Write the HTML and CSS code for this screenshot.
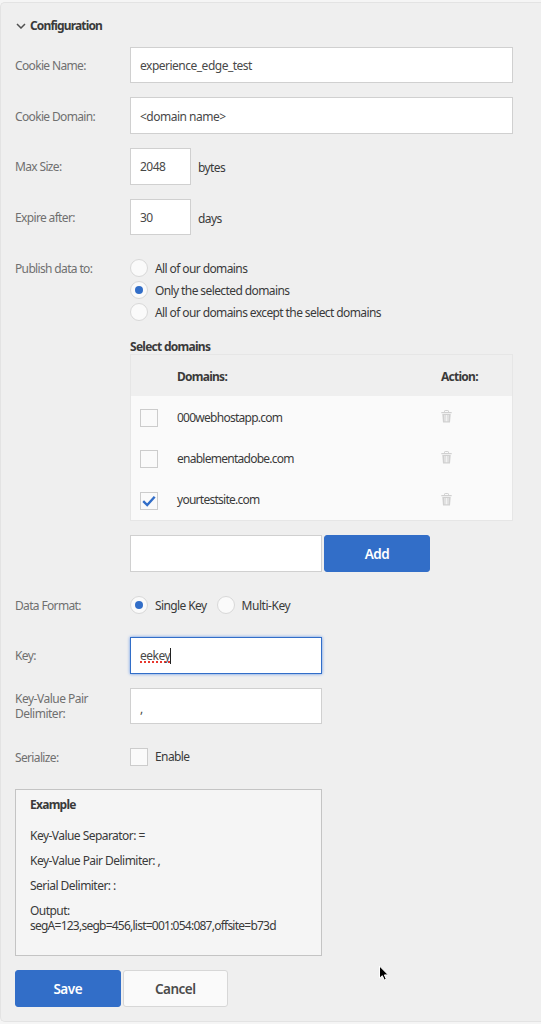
FILE: index.html
```html
<!DOCTYPE html>
<html lang="en">
<head>
<meta charset="utf-8">
<title>Configuration</title>
<link rel="stylesheet" href="styles.css">
</head>
<body>
<svg class="defs" width="0" height="0" aria-hidden="true">
  <symbol id="trash" viewBox="0 0 11 13">
    <path d="M3.5 2V1.2Q3.5.5 4.2.5h2.6q.7 0 .7.7V2" fill="none" stroke="currentColor"/>
    <path d="M.3 1.9h10.4v1.4H.3zM1.3 4h8.4L9 12.5H2z" fill="currentColor"/>
    <path d="M3.9 5l.2 6.3M5.5 5v6.3M7.1 5l-.2 6.3" stroke="#fafafa" stroke-width=".8" fill="none"/>
  </symbol>
</svg>
<main class="panel">
  <h1 class="title"><svg class="chevron" viewBox="0 0 10 6"><path d="M1 1l4 4 4-4"/></svg>Configuration</h1>

  <div class="row"><label class="label">Cookie Name:</label><div class="input wide"><span>experience_edge_test</span></div></div>
  <div class="row"><label class="label">Cookie Domain:</label><div class="input wide"><span>&lt;domain name&gt;</span></div></div>
  <div class="row"><label class="label">Max Size:</label><div class="input small"><span>2048</span></div><span class="unit">bytes</span></div>
  <div class="row"><label class="label">Expire after:</label><div class="input small"><span>30</span></div><span class="unit">days</span></div>

  <div class="row publish"><label class="label">Publish data to:</label>
    <div class="options">
      <div class="option"><i class="radio"></i><span>All of our domains</span></div>
      <div class="option"><i class="radio on"></i><span>Only the selected domains</span></div>
      <div class="option"><i class="radio"></i><span>All of our domains except the select domains</span></div>
    </div>
  </div>

  <section class="domains">
    <h2 class="subtitle">Select domains</h2>
    <div class="table">
      <div class="tr head"><span></span><b>Domains:</b><b>Action:</b></div>
      <div class="tr"><i class="check"></i><span>000webhostapp.com</span><svg class="trash"><use href="#trash"/></svg></div>
      <div class="tr"><i class="check"></i><span>enablementadobe.com</span><svg class="trash"><use href="#trash"/></svg></div>
      <div class="tr"><i class="check"><svg class="tick" viewBox="0 0 14 12"><path d="M1.2 6.2l4 3.8L12.7 1.7"/></svg></i><span>yourtestsite.com</span><svg class="trash"><use href="#trash"/></svg></div>
    </div>
    <div class="add"><div class="input medium"></div><button class="btn primary">Add</button></div>
  </section>

  <div class="row format"><label class="label">Data Format:</label>
    <div class="option single"><i class="radio on"></i><span>Single Key</span></div>
    <div class="option"><i class="radio"></i><span>Multi-Key</span></div>
  </div>
  <div class="row"><label class="label">Key:</label><div class="input medium focus"><span class="typo">eekey</span><i class="caret"></i></div></div>
  <div class="row"><label class="label two-line">Key-Value Pair<br>Delimiter:</label><div class="input medium"><span class="comma">,</span></div></div>
  <div class="row serialize"><label class="label">Serialize:</label><div class="option"><i class="check"></i><span>Enable</span></div></div>

  <section class="example">
    <h2 class="subtitle">Example</h2>
    <p>Key-Value Separator: =</p>
    <p>Key-Value Pair Delimiter: ,</p>
    <p>Serial Delimiter: :</p>
    <p>Output:<br><span class="output">segA=123,segb=456,list=001:054:087,offsite=b73d</span></p>
  </section>

  <div class="actions"><button class="btn primary">Save</button><button class="btn secondary">Cancel</button></div>
</main>
<svg class="pointer" viewBox="0 0 12 18"><path d="M1.5 1v12.2l2.8-2.5 2 4.4 2-.9-1.9-4.3h3.9z" fill="#000" stroke="#fff"/></svg>
</body>
</html>
```
FILE: styles.css
```css
* { box-sizing: border-box; }
body { margin: 0; height: 1024px; overflow: hidden; background: #f5f5f5; color: #3a3a3a; font: 12px/15px "Noto Sans", "Open Sans", sans-serif; letter-spacing: -0.6px; }
.defs { position: absolute; }
.panel { height: 1020px; margin-top: 2px; padding: 0 0 0 14px; background: #efefef; border: 1px solid #e3e3e3; border-right: 0; border-radius: 5px 0 0 5px; display: flex; flex-direction: column; }
.title { margin: 15px 0 13px; height: 16px; font-size: 12px; line-height: 16px; letter-spacing: -0.85px; display: flex; align-items: center; }
.chevron { width: 10px; height: 6px; margin: 0 4px 0 1px; fill: none; stroke: #505050; stroke-width: 1.5; }
.row { display: flex; align-items: center; height: 36px; margin-bottom: 14.7px; flex: none; }
.label { width: 115px; padding-top: 1px; flex: none; color: #707070; letter-spacing: -0.65px; }
.two-line { padding-top: 0; letter-spacing: -0.5px; }
.input { height: 36.5px; background: #fff; border: 1px solid #d0d0d0; padding: 1px 9px 0; display: flex; align-items: center; color: #484848; letter-spacing: -0.5px; flex: none; }
.wide { width: 383px; }
.small { width: 61px; }
.medium { width: 192px; }
.unit { margin: 3px 0 0 7px; }
.publish { align-items: flex-start; height: 66px; margin-top: 7.7px; margin-bottom: 0; }
.publish .label { line-height: 22px; }
.option { display: flex; align-items: center; height: 22px; gap: 7px; }
.radio { width: 18px; height: 18px; border: 1px solid #d8d8d8; border-radius: 50%; background: #fafafa; display: grid; place-items: center; flex: none; }
.radio.on::after { content: ""; width: 8px; height: 8px; border-radius: 50%; background: #326ec8; }
.domains { margin: 15.6px 0 0 115px; }
.subtitle { margin: 0; font-size: 12px; line-height: 15px; letter-spacing: -0.73px; }
.table { width: 383px; height: 167px; background: #fafafa; border: 1px solid #e6e6e6; }
.tr { display: grid; grid-template-columns: 36px 264px 1fr; padding-left: 10px; height: 41.2px; align-items: center; letter-spacing: -0.74px; }
.head { background: #efefef; height: 41px; }
.tr span, .head b { padding-top: 1px; }
.check { width: 18px; height: 18px; border: 1px solid #ccc; background: #fafafa; display: grid; place-items: center; flex: none; }
.tr .check { margin: 3px 0 0 -1px; }
.tick { width: 14px; height: 12px; fill: none; stroke: #326ec8; stroke-width: 2.4; }
.trash { width: 11px; height: 13px; color: #d0d0d0; }
.add { display: flex; gap: 2px; margin-top: 14px; }
.btn { width: 106px; height: 37px; border: 1px solid #326ec8; border-radius: 3px; font: 600 13.5px/18px "Noto Sans", "Open Sans", sans-serif; letter-spacing: -0.5px; padding: 1px 0 0; }
.primary { background: #326ec8; color: #fff; }
.secondary { background: #fafafa; color: #4b4b4b; border-color: #d7d7d7; }
.format { margin-top: 15.4px; margin-bottom: 14px; }
.single { margin-right: 10px; }
.single + .option { letter-spacing: -0.45px; }
.focus { border-color: #326ec8; box-shadow: 0 0 3px #5b91e8; }
.typo { text-decoration: underline dotted #e8382e 2px; text-underline-offset: 1px; text-decoration-skip-ink: none; }
.caret { width: 1px; height: 16px; background: #222; }
.comma { margin-top: 3px; }
.serialize { margin-bottom: 14px; }
.example { width: 307px; height: 167px; padding: 7px 14px; background: #f5f5f5; border: 1px solid #c4c4c4; letter-spacing: -0.54px; flex: none; }
.example .subtitle { margin-bottom: 16px; }
.example p { margin: 0 0 10px; }
.output { white-space: nowrap; letter-spacing: -0.76px; }
.actions { display: flex; gap: 2px; margin-top: 14px; }
.actions .btn { width: 105.5px; }
.pointer { position: absolute; left: 378px; top: 965px; width: 12px; height: 18px; }
```
